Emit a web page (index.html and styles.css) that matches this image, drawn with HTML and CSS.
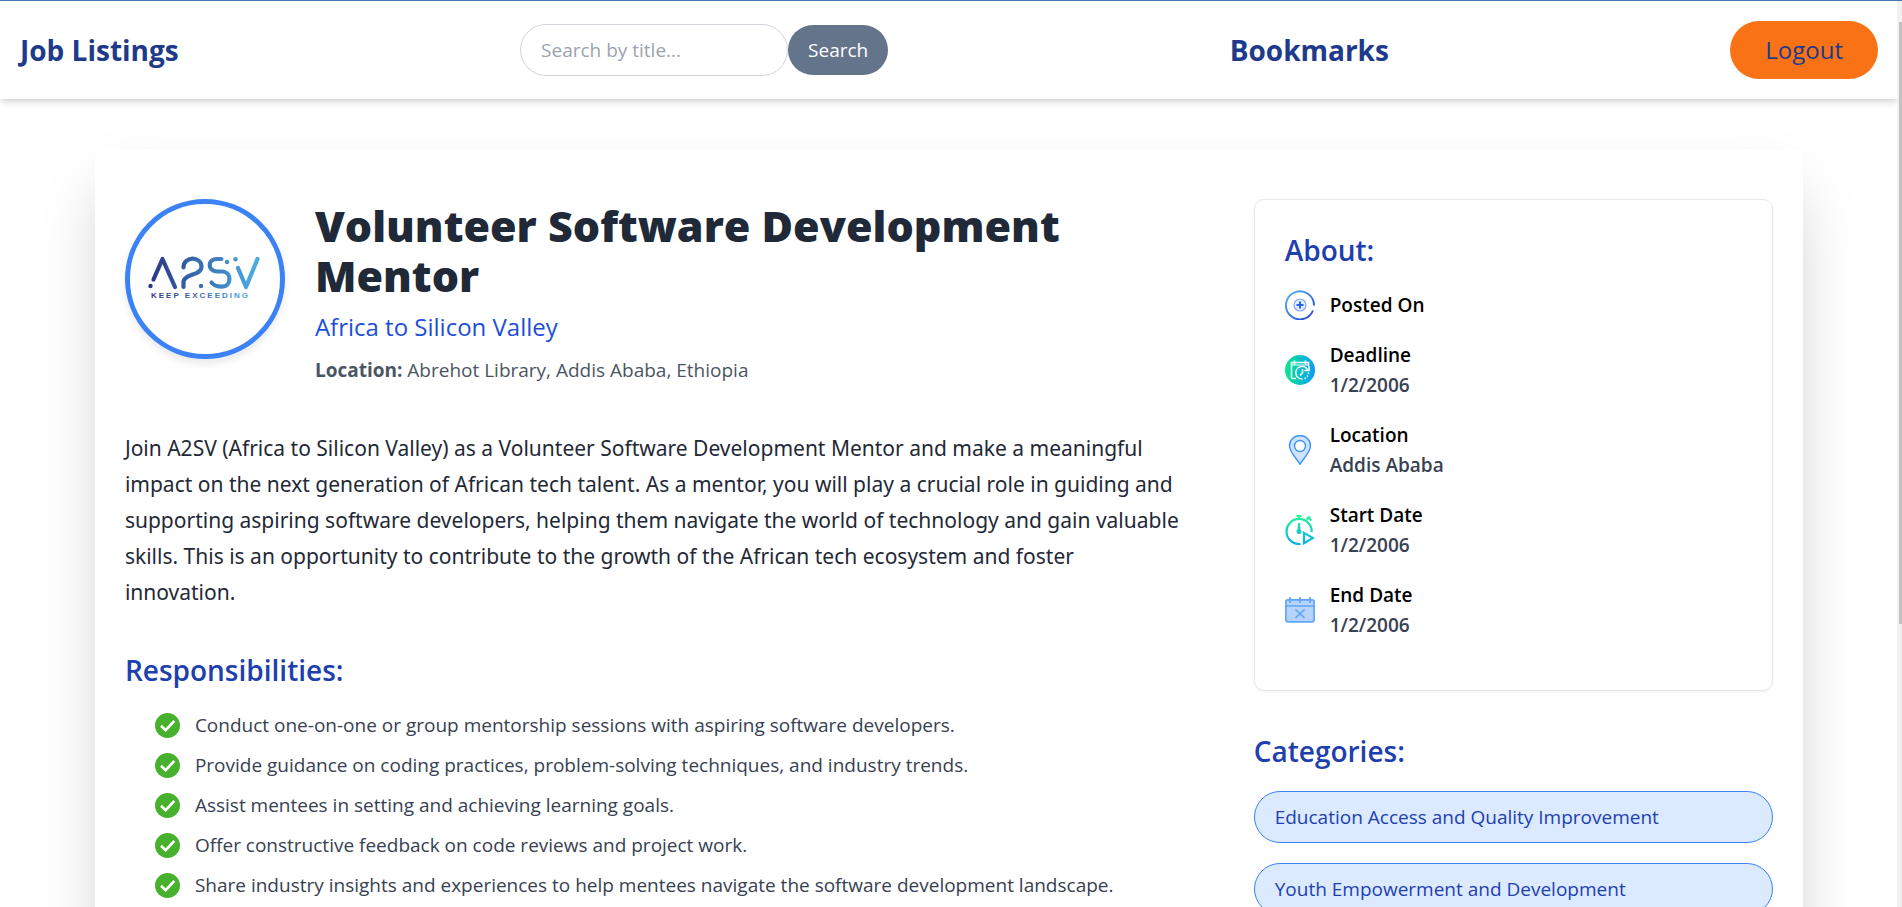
FILE: index.html
```html
<!DOCTYPE html>
<html lang="en">
<head>
<meta charset="utf-8">
<meta name="viewport" content="width=device-width, initial-scale=1">
<title>Job Listings</title>
<link rel="stylesheet" href="styles.css">
</head>
<body>
<svg class="defs" aria-hidden="true">
  <defs>
    <linearGradient id="g-logo" gradientUnits="userSpaceOnUse" x1="0" y1="0" x2="112" y2="0"><stop offset="0" stop-color="#2b3484"/><stop offset="1" stop-color="#4bb1e6"/></linearGradient>
    <linearGradient id="g-post" x1="0" y1="0" x2="1" y2="1"><stop offset="0" stop-color="#5bb5f5"/><stop offset="1" stop-color="#1f3fd8"/></linearGradient>
    <linearGradient id="g-dead" x1="0" y1="0" x2="1" y2="0"><stop offset="0" stop-color="#07e88c"/><stop offset="1" stop-color="#0a9cf8"/></linearGradient>
    <linearGradient id="g-start" gradientUnits="userSpaceOnUse" x1="0" y1="0" x2="0" y2="30"><stop offset="0" stop-color="#2af598"/><stop offset="1" stop-color="#08aeea"/></linearGradient>
    <symbol id="tick" viewBox="0 0 25 25"><circle cx="12.500" cy="12.500" r="12.500" fill="#47b02c"/><path d="M6 12.700l4.600 4.500 8.700-9.200" fill="none" stroke="#fff" stroke-width="2.600"/></symbol>
  </defs>
</svg>
<header class="topbar">
  <a class="nav-link" href="#">Job Listings</a>
  <form class="search">
    <input class="search-input" type="text" placeholder="Search by title..." aria-label="Search by title">
    <button class="search-btn" type="button">Search</button>
  </form>
  <a class="nav-link" href="#">Bookmarks</a>
  <button class="logout" type="button">Logout</button>
</header>
<main class="card">
  <section class="main-col">
    <div class="intro">
      <div class="avatar">
        <svg width="114" height="46" viewBox="0 0 114 46" role="img" aria-label="A2SV Keep Exceeding">
          <g fill="none" stroke="url(#g-logo)" stroke-width="4.200" stroke-linecap="round" stroke-linejoin="round">
            <path d="M5.500 23.500L14.500 3l12.500 28"/>
            <path d="M35.500 11.500C35.500 -.500 54 0 53.500 11c-.500 9-16 6-18 14.500V31"/>
            <path d="M73.500 3h-4.500c-9.500 0-10 12 0 12.500h6c9 1 8.500 15.200-1 15.200-6 0-8-1.200-10.500-4.200"/>
            <path d="M90 12l8 19L109.500 3"/>
          </g>
          <g fill="url(#g-logo)"><circle cx="2.500" cy="30" r="2.200"/><circle cx="53" cy="30" r="2.200"/><circle cx="79" cy="6" r="2.200"/><circle cx="87.500" cy="3.200" r="2.200"/></g>
          <text class="logo-text" x="3" y="42" fill="url(#g-logo)">KEEP EXCEEDING</text>
        </svg>
      </div>
      <div class="intro-text">
        <h1>Volunteer Software Development Mentor</h1>
        <p class="company">Africa to Silicon Valley</p>
        <p class="place"><strong>Location:</strong> Abrehot Library, Addis Ababa, Ethiopia</p>
      </div>
    </div>
    <p class="summary">Join A2SV (Africa to Silicon Valley) as a Volunteer Software Development Mentor and make a meaningful impact on the next generation of African tech talent. As a mentor, you will play a crucial role in guiding and supporting aspiring software developers, helping them navigate the world of technology and gain valuable skills. This is an opportunity to contribute to the growth of the African tech ecosystem and foster innovation.</p>
    <h2>Responsibilities:</h2>
    <ul class="duties">
      <li><svg class="tick"><use href="#tick"/></svg>Conduct one-on-one or group mentorship sessions with aspiring software developers.</li>
      <li><svg class="tick"><use href="#tick"/></svg>Provide guidance on coding practices, problem-solving techniques, and industry trends.</li>
      <li><svg class="tick"><use href="#tick"/></svg>Assist mentees in setting and achieving learning goals.</li>
      <li><svg class="tick"><use href="#tick"/></svg>Offer constructive feedback on code reviews and project work.</li>
      <li><svg class="tick"><use href="#tick"/></svg>Share industry insights and experiences to help mentees navigate the software development landscape.</li>
    </ul>
  </section>
  <aside class="side-col">
    <section class="about">
      <h2>About:</h2>
      <ul class="facts">
        <li>
          <svg class="icon" viewBox="0 0 30 30" fill="none">
            <path d="M29 15.500A14 14 0 1 0 28 20.500" stroke="url(#g-post)" stroke-width="1.900"/>
            <circle cx="15" cy="15" r="6" fill="#e4eeff" stroke="#82aaf8" stroke-width="1.200"/>
            <path d="M15 11.500v7M11.500 15h7" stroke="#2463eb" stroke-width="2"/>
          </svg>
          <div><div class="label">Posted On</div></div>
        </li>
        <li>
          <svg class="icon" viewBox="0 0 30 30" fill="none">
            <circle cx="15" cy="15" r="15" fill="url(#g-dead)"/>
            <g stroke="#fff" stroke-width="1.500">
              <path d="M11 23.500H7.500a1 1 0 0 1-1-1V7.500h17V11M9.500 5.500v4M20.500 5.500v4"/>
              <path d="M22.500 14.500a6.300 6.300 0 1 0-5 9.500M24 11v4.500h-4.500M17.500 14v4l-2.500 2.500"/>
              <path d="M19.500 23.500a6.300 6.300 0 0 0 4-6" stroke-dasharray="1.500 1.500"/>
            </g>
            <path d="M7 9h16v2H7z" fill="#fff" opacity=".5"/>
          </svg>
          <div><div class="label">Deadline</div><div class="value">1/2/2006</div></div>
        </li>
        <li>
          <svg class="icon" viewBox="0 0 30 30" fill="none" stroke="#3b94fb" stroke-width="1.400">
            <path d="M15 29.300C12 24 4.500 17 4.500 11a10.500 10.500 0 0 1 21 0c0 6-7.500 13-10.500 18.300z" fill="#cfe3fe"/>
            <circle cx="15" cy="11" r="5.500" fill="#fff"/>
          </svg>
          <div><div class="label">Location</div><div class="value">Addis Ababa</div></div>
        </li>
        <li>
          <svg class="icon" viewBox="0 0 30 30" fill="none" stroke="url(#g-start)" stroke-width="2.200">
            <path d="M15.500 29A12.600 12.600 0 1 1 26.700 17M14 3.500V0M11.500 1h5M22.500 2l4 3.500M21.500 4.500L25 1.500M19 17.800v10.400l9-5.200z"/>
            <path d="M13 8h2l.5 8h-3z" fill="url(#g-start)" stroke="none"/><circle cx="14" cy="16.500" r="2.500" fill="url(#g-start)" stroke="none"/>
          </svg>
          <div><div class="label">Start Date</div><div class="value">1/2/2006</div></div>
        </li>
        <li>
          <svg class="icon" viewBox="0 0 30 30" fill="none" stroke="#60a5fa" stroke-width="1.700">
            <rect x=".9" y="4.800" width="28.200" height="22" rx="2" fill="#b5d3fb"/>
            <path d="M1 11h28M5 2v6M15 2v6M25 2v6M10.500 14.500l9 8.500M19.500 14.500l-9 8.500"/>
          </svg>
          <div><div class="label">End Date</div><div class="value">1/2/2006</div></div>
        </li>
      </ul>
    </section>
    <section class="categories">
      <h2>Categories:</h2>
      <ul class="pills">
        <li>Education Access and Quality Improvement</li>
        <li>Youth Empowerment and Development</li>
      </ul>
    </section>
  </aside>
</main>
<div class="scroll-track" aria-hidden="true"><div class="scroll-thumb"></div></div>
</body>
</html>
```
FILE: styles.css
```css
* { box-sizing: border-box; }
body {
  margin: 0;
  padding-right: 4px;
  border-top: 1px solid #4a74ae;
  background: #fff;
  font-family: "Open Sans", "Noto Sans", sans-serif;
  font-size: 19px;
  line-height: 30px;
  color: #1f2937;
}
h1, h2, p, ul { margin: 0; padding: 0; }
ul { list-style: none; }
.defs { position: absolute; width: 0; height: 0; }

.topbar {
  display: flex;
  align-items: center;
  justify-content: space-between;
  padding: 20px;
  background: #fff;
  box-shadow: 0 5px 8px -1px rgba(0, 0, 0, .1), 0 3px 5px -2px rgba(0, 0, 0, .1);
}
.nav-link {
  font-size: 28px;
  font-weight: 700;
  line-height: 40px;
  color: #1e3a8a;
  text-decoration: none;
}
.search { display: flex; align-items: center; }
.search-input {
  width: 268px;
  height: 52px;
  padding: 0 20px;
  border: 1px solid #d1d5db;
  border-radius: 26px;
  background: #fff;
  font: inherit;
}
.search-input::placeholder { color: #9ca3af; opacity: 1; }
.search-btn {
  height: 50px;
  padding: 0 20px;
  border: 0;
  border-radius: 25px;
  background: #64748b;
  color: #fff;
  font: inherit;
}
.logout {
  height: 58px;
  padding: 0 35px;
  border: 0;
  border-radius: 29px;
  background: #f97316;
  color: #1e3a8a;
  font: inherit;
  font-size: 24px;
}

.card {
  display: grid;
  grid-template-columns: 2fr 1fr;
  width: 90%;
  margin: 50px auto;
  padding: 50px 30px;
  border-radius: 10px;
  background: #fff;
  box-shadow: 0 31px 62px -15px rgba(0, 0, 0, .25);
}
.main-col { padding-right: 40px; }
.side-col { padding-left: 30px; }
h2 {
  font-size: 28px;
  font-weight: 600;
  line-height: 40px;
  color: #1e40af;
}

.intro { display: flex; gap: 30px; margin-bottom: 45px; }
.avatar {
  display: flex;
  flex: none;
  align-items: center;
  justify-content: center;
  width: 160px;
  height: 160px;
  border: 5px solid #3b82f6;
  border-radius: 50%;
  box-shadow: 0 5px 8px -1px rgba(0, 0, 0, .1);
}
.logo-text {
  font-family: "Liberation Sans", sans-serif;
  font-size: 8px;
  font-weight: 700;
  letter-spacing: 2px;
}
h1 {
  padding-top: 2px;
  font-size: 43px;
  font-weight: 800;
  line-height: 50px;
  color: #1f2937;
}
.company {
  margin-top: 6px;
  font-size: 24px;
  line-height: 40px;
  color: #1d4ed8;
}
.place { margin-top: 8px; color: #4b5563; }
.summary {
  margin-bottom: 40px;
  font-family: "Noto Sans", "Open Sans", sans-serif;
  font-size: 21px;
  line-height: 36px;
}
.duties { margin-top: 20px; padding-left: 30px; color: #374151; }
.duties li { display: flex; align-items: center; gap: 15px; margin-bottom: 10px; }
.tick { flex: none; width: 25px; height: 25px; }

.about {
  padding: 30px;
  border: 1px solid #e5e7eb;
  border-radius: 10px;
  box-shadow: 0 1px 3px rgba(0, 0, 0, .06);
}
.facts { margin-top: 20px; }
.facts li { display: flex; align-items: center; gap: 15px; margin-bottom: 20px; font-weight: 600; }
.icon { flex: none; width: 30px; height: 30px; }
.label { color: #000; }
.value { color: #374151; }

.categories { margin-top: 40px; }
.pills { margin-top: 20px; }
.pills li {
  margin-bottom: 20px;
  padding: 10px 20px;
  border: 1px solid #3b82f6;
  border-radius: 26px;
  background: #dbeafe;
  color: #1e40af;
}

.scroll-track {
  position: fixed;
  top: 1px;
  right: 0;
  bottom: 0;
  width: 5px;
  padding: 21px 0 0 2px;
  background: #f1f1f1;
}
.scroll-thumb { height: 68%; background: #c1c1c1; }
```
